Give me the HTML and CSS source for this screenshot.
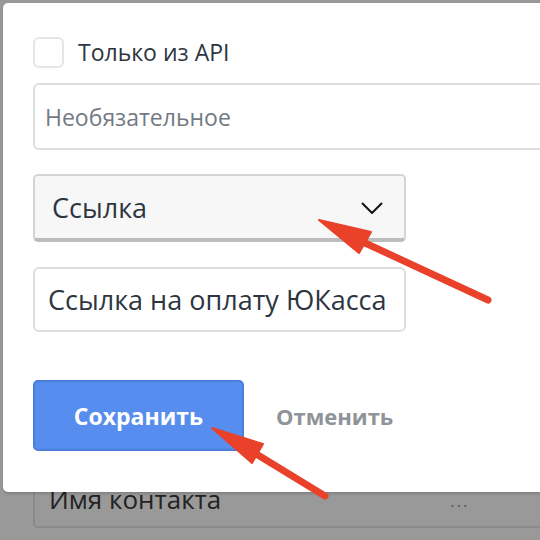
FILE: index.html
```html
<!DOCTYPE html>
<html lang="ru">
<head>
    <meta charset="UTF-8">
    <meta name="viewport" content="width=device-width, initial-scale=1.0">
    <title>Настройки поля</title>
    <link rel="stylesheet" href="styles.css">
</head>
<body>
    <!-- страница под затемнением -->
    <div class="page">
        <div class="contact-field">
            <span class="contact-name">Имя контакта</span>
            <span class="contact-more">•••</span>
        </div>
    </div>

    <!-- модальное окно -->
    <div class="modal">
        <label class="check-row">
            <span class="checkbox"></span>
            <span class="check-label">Только из API</span>
        </label>

        <div class="field field-wide">
            <span class="placeholder">Необязательное</span>
        </div>

        <div class="select">
            <span class="select-value">Ссылка</span>
            <svg class="chevron" width="22" height="12" viewBox="0 0 22 12">
                <path d="M1 1 L11 11 L21 1" fill="none" stroke="#111" stroke-width="2"/>
            </svg>
        </div>

        <div class="field field-short">
            <span class="field-value">Ссылка на оплату ЮКасса</span>
        </div>

        <div class="actions">
            <button class="btn-save">Сохранить</button>
            <button class="btn-cancel">Отменить</button>
        </div>
    </div>

    <!-- стрелки-указатели -->
    <svg class="arrows" width="540" height="540" viewBox="0 0 540 540">
        <g fill="#e9412a" stroke="#e9412a" stroke-linecap="round" stroke-linejoin="round">
            <line x1="488" y1="300" x2="350" y2="236" stroke-width="7"/>
            <polygon points="319,220 371,232 359,253" stroke-width="2"/>
            <line x1="325" y1="496" x2="240" y2="444" stroke-width="7"/>
            <polygon points="212,428 263,444 252,463" stroke-width="2"/>
        </g>
    </svg>
</body>
</html>
```

FILE: styles.css
```css
* {
    margin: 0;
    padding: 0;
    box-sizing: border-box;
}

body {
    width: 540px;
    height: 540px;
    overflow: hidden;
    position: relative;
    background: #999999;
    font-family: 'Open Sans', 'Noto Sans', sans-serif;
}

.page {
    padding: 458px 0 0 33px;
}

.contact-field {
    height: 70px;
    border: 2px solid #8b8b8b;
    border-right: none;
    border-radius: 5px 0 0 5px;
    display: flex;
    align-items: center;
    padding: 0 14px;
    margin-right: -20px;
}

.contact-name {
    flex: 1;
    font-size: 26px;
    color: #222222;
    padding-top: 12px;
}

.contact-more {
    font-size: 9px;
    letter-spacing: 3px;
    color: #55595c;
    margin-right: 76px;
    padding-top: 24px;
}

.modal {
    position: absolute;
    top: 3px;
    left: 3px;
    width: 580px;
    background: #ffffff;
    border-radius: 5px;
    box-shadow: 0 2px 3px rgba(0,0,0,0.15);
    padding: 33px 0 41px 30px;
    display: flex;
    flex-direction: column;
}

.check-row {
    display: flex;
    align-items: center;
    gap: 14px;
}

.checkbox {
    width: 31px;
    height: 31px;
    border: 2px solid #e6e6e6;
    border-radius: 6px;
}

.check-label {
    font-size: 23px;
    color: #2d3540;
}

.field {
    border: 2px solid #dedede;
    border-radius: 6px;
    display: flex;
    align-items: center;
}

.field-wide {
    margin-top: 15px;
    height: 67px;
    width: 560px;
    padding-left: 10px;
}

.placeholder {
    font-size: 23px;
    color: #737a84;
}

.select {
    margin-top: 24px;
    width: 373px;
    height: 68px;
    background: #f7f7f7;
    border: 2px solid #d4d4d4;
    border-bottom: 4px solid #bdbdbd;
    border-radius: 5px;
    display: flex;
    align-items: center;
    justify-content: space-between;
    padding: 0 21px 0 17px;
}

.select-value {
    font-size: 27px;
    color: #2d3540;
}

.chevron {
    margin-top: 2px;
}

.field-short {
    margin-top: 25px;
    width: 373px;
    height: 65px;
    padding-left: 13px;
}

.field-value {
    font-size: 27px;
    color: #2d3540;
}

.actions {
    margin-top: 48px;
    display: flex;
    align-items: center;
    gap: 32px;
}

.btn-save {
    width: 211px;
    height: 71px;
    background: #568dee;
    border: 2px solid #4a7fd9;
    border-radius: 5px;
    color: #ffffff;
    font-family: inherit;
    font-size: 23px;
    font-weight: bold;
}

.btn-cancel {
    background: none;
    border: none;
    color: #8e9499;
    font-family: inherit;
    font-size: 22px;
    font-weight: bold;
}

.arrows {
    position: absolute;
    top: 0;
    left: 0;
}
```
